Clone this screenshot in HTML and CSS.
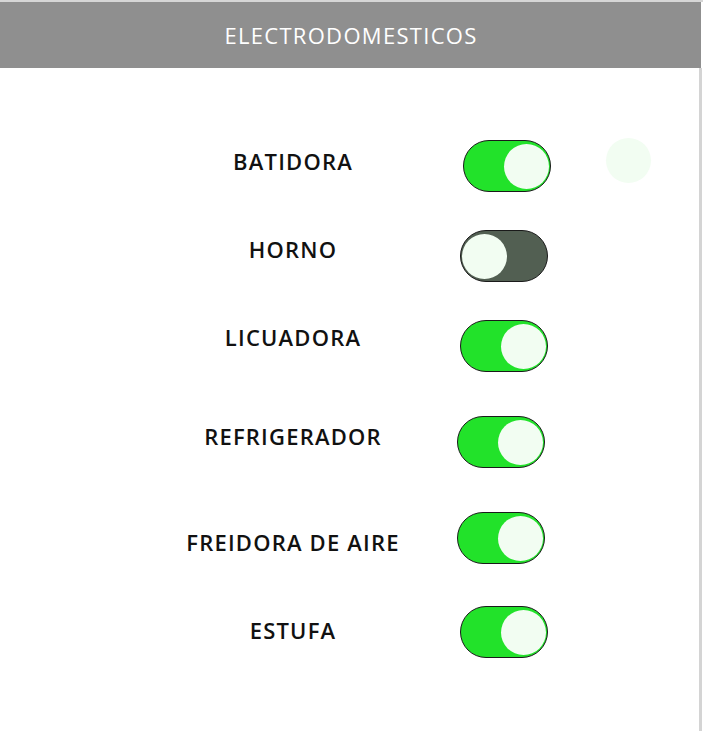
FILE: index.html
```html
<!DOCTYPE html>
<html lang="es">
<head>
<meta charset="utf-8">
<title>Electrodomesticos</title>
<link rel="stylesheet" href="styles.css">
</head>
<body>
<div class="page">
  <header class="topbar"><h1 class="title">ELECTRODOMESTICOS</h1></header>
  <main class="list">
    <div class="row row-1">
      <span class="label">BATIDORA</span>
      <span class="toggle on"><span class="knob"></span></span>
      <span class="ripple"></span>
    </div>
    <div class="row row-2">
      <span class="label">HORNO</span>
      <span class="toggle off"><span class="knob"></span></span>
    </div>
    <div class="row row-3">
      <span class="label">LICUADORA</span>
      <span class="toggle on"><span class="knob"></span></span>
    </div>
    <div class="row row-4">
      <span class="label">REFRIGERADOR</span>
      <span class="toggle on"><span class="knob"></span></span>
    </div>
    <div class="row row-5">
      <span class="label">FREIDORA DE AIRE</span>
      <span class="toggle on"><span class="knob"></span></span>
    </div>
    <div class="row row-6">
      <span class="label">ESTUFA</span>
      <span class="toggle on"><span class="knob"></span></span>
    </div>
  </main>
</div>
</body>
</html>
```
FILE: styles.css
```css
html, body {
  margin: 0;
  padding: 0;
  background: #ffffff;
}
body {
  font-family: "Open Sans", "Noto Sans", sans-serif;
  width: 703px;
  height: 731px;
  overflow: hidden;
}
.page {
  display: flex;
  flex-direction: column;
  height: 731px;
  border-top: 2px solid #d6d6d6;
  box-sizing: border-box;
}
.topbar {
  width: 701px;
  height: 66px;
  background: #8f8f8f;
  display: flex;
  align-items: center;
  justify-content: center;
}
.title {
  margin: 0;
  color: #ffffff;
  font-size: 22px;
  font-weight: 500;
  letter-spacing: 1.3px;
  padding-left: 1px;
  line-height: 1;
}
.list {
  flex: 1;
  width: 699px;
  border-right: 3px solid #d4d4d4;
  padding-top: 72px;
  display: flex;
  flex-direction: column;
}
.row {
  position: relative;
  display: flex;
  align-items: center;
  height: 52px;
  padding-left: 164px;
}
.label {
  width: 256px;
  text-align: center;
  font-size: 22px;
  font-weight: 600;
  letter-spacing: 1.2px;
  padding-left: 2px;
  box-sizing: border-box;
  color: #111111;
}
.toggle {
  position: relative;
  box-sizing: border-box;
  width: 88px;
  height: 52px;
  border-radius: 26px;
  border: 1.5px solid #1a1a1a;
  display: flex;
  align-items: center;
  padding: 0 1px;
}
.toggle.on {
  background: #22e22a;
  justify-content: flex-end;
}
.toggle.off {
  background: #525f52;
  justify-content: flex-start;
}
.knob {
  width: 45px;
  height: 45px;
  border-radius: 50%;
  background: #f2fdf2;
}
.ripple {
  position: absolute;
  left: 606px;
  top: -2px;
  width: 45px;
  height: 45px;
  border-radius: 50%;
  background: #f2fdf2;
}
.row-1 .toggle { margin-left: 43px; }
.row-1 .label { transform: translateY(-5px); }
.row-2 { margin-top: 38px; }
.row-2 .toggle { margin-left: 40px; }
.row-2 .label { transform: translateY(-7px); }
.row-3 { margin-top: 38px; }
.row-3 .toggle { margin-left: 40px; }
.row-3 .label { transform: translateY(-9px); }
.row-4 { margin-top: 44px; }
.row-4 .toggle { margin-left: 37px; }
.row-4 .label { transform: translateY(-6px); }
.row-5 { margin-top: 44px; }
.row-5 .toggle { margin-left: 37px; }
.row-5 .label { transform: translateY(4px); }
.row-6 { margin-top: 42px; }
.row-6 .toggle { margin-left: 40px; }
.row-6 .label { transform: translateY(-2px); }
```
